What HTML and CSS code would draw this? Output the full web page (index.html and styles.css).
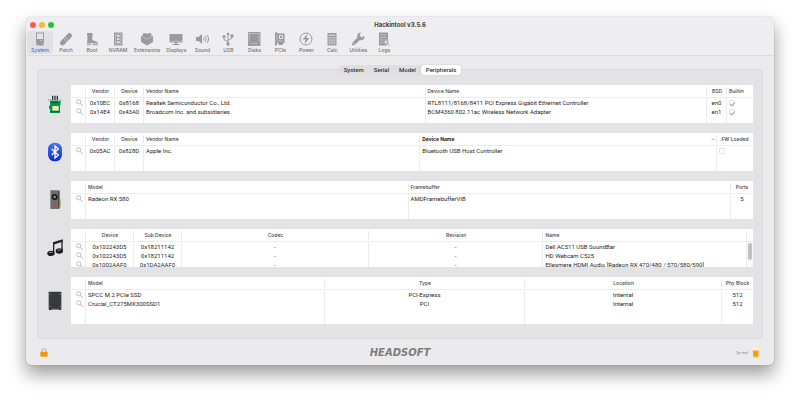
FILE: index.html
```html
<!DOCTYPE html>
<html lang="en">
<head>
    <meta charset="UTF-8">
    <meta name="viewport" content="width=device-width, initial-scale=1.0">
    <title>Hackintool v3.5.6</title>
    <link rel="stylesheet" href="styles.css">
</head>
<body>
    <svg class="defs" width="0" height="0">
        <symbol id="search" viewBox="0 0 14 14">
            <circle cx="5.5" cy="5.5" r="4.3" fill="none" stroke="#a8a8a8" stroke-width="1.4"/>
            <path d="M8.8 8.8L13 13" stroke="#a0a0a0" stroke-width="1.8"/>
        </symbol>
    </svg>

    <div class="window">
        <header class="header">
            <div class="titlebar">
                <div class="lights">
                    <span class="light red"></span>
                    <span class="light yellow"></span>
                    <span class="light green"></span>
                </div>
                <h1>Hackintool v3.5.6</h1>
            </div>
            <nav class="toolbar">
                <button class="tool active">
                    <svg viewBox="0 0 28 28"><path d="M6 1h16v21H6z"/><rect x="8" y="3" width="12" height="11" class="light-fill"/><path class="light-line thin" d="M14 17.500h6"/><path d="M7 22h14v5H7z"/></svg>
                    <span>System</span>
                </button>
                <button class="tool">
                    <svg viewBox="0 0 28 28"><rect x="-1" y="9.500" width="30" height="10" rx="5" transform="rotate(-47 14 14.500)"/><g class="light-fill"><circle cx="14" cy="11.500" r="1"/><circle cx="17" cy="14" r="1"/><circle cx="11" cy="14.500" r="1"/><circle cx="14" cy="17.500" r="1"/></g></svg>
                    <span>Patch</span>
                </button>
                <button class="tool">
                    <svg viewBox="0 0 28 28"><path d="M4 2h11v4l-1 8c1 3 4 4 9 5 2 .5 3 2 3 4H15l-3-2v2H4l1-10z"/><path d="M4 24.500h8v2H4zM15 24.500h11v2H15z"/></svg>
                    <span>Boot</span>
                </button>
                <button class="tool">
                    <svg viewBox="0 0 28 28"><rect x="6" y="1" width="17" height="26"/><path class="light-line thin" d="M9 4v20h11V4z"/><rect x="12" y="6" width="5" height="4" class="light-fill"/><rect x="12" y="12" width="5" height="4" class="light-fill"/><rect x="12" y="18" width="5" height="4" class="light-fill"/></svg>
                    <span>NVRAM</span>
                </button>
                <button class="tool">
                    <svg viewBox="0 0 28 28"><path d="M14 3l12 6v11l-12 7L2 20V9z"/><circle cx="9" cy="6" r="4"/><circle cx="19" cy="6" r="4"/><path class="light-line thin" d="M4 9l10 5 10-5"/></svg>
                    <span>Extensions</span>
                </button>
                <button class="tool">
                    <svg viewBox="0 0 28 28"><path d="M1 4h26v17H1z"/><path class="light-line thin" d="M2 18.500h24"/><path d="M12 20h4v4h5v2H7v-2h5z"/></svg>
                    <span>Displays</span>
                </button>
                <button class="tool">
                    <svg viewBox="0 0 28 28"><path d="M2 10h5l7-6v20l-7-6H2z"/><path class="line" d="M17 11c1 2 1 4 0 6M20 8c3 4 3 8 0 12M24 6c4 5 4 11 0 16"/></svg>
                    <span>Sound</span>
                </button>
                <button class="tool">
                    <svg viewBox="0 0 28 28"><path class="line" d="M14 3v20M14 20l-8-5v-5M14 17l8-5V8"/><path d="M14 0l3.500 6h-7z"/><circle cx="14" cy="24" r="3.500"/><circle cx="6" cy="9" r="3"/><rect x="19" y="5" width="6" height="6"/></svg>
                    <span>USB</span>
                </button>
                <button class="tool">
                    <svg viewBox="0 0 28 28"><rect x="2" y="0" width="25" height="28" rx="2"/><path class="light-line thin" d="M4.500 20V3h20v17M8 25v-4M12 25v-4M16 25v-4M20 25v-4"/></svg>
                    <span>Disks</span>
                </button>
                <button class="tool">
                    <svg viewBox="0 0 28 28"><path d="M4 1h5v2h14v19h-3v4h-9v-4H8v5H4z"/><rect x="12" y="6" width="8" height="8" class="light-fill"/><rect x="14" y="8" width="4" height="4"/><path class="light-line thin" d="M11 18h9M8 5v15"/></svg>
                    <span>PCIe</span>
                </button>
                <button class="tool">
                    <svg viewBox="0 0 28 28"><circle cx="14" cy="14" r="12" class="line"/><path d="M17 4L7 15h6l-2 9 10-12h-6z"/></svg>
                    <span>Power</span>
                </button>
                <button class="tool">
                    <svg viewBox="0 0 28 28"><path d="M5 2h18v25H5z"/><path class="light-line" d="M7 6.500h14"/><path class="light-line thin" d="M5 11.500h18M5 16.500h18M5 21.500h18M9.500 11v15M14 11v15M18.500 11v15"/></svg>
                    <span>Calc</span>
                </button>
                <button class="tool">
                    <svg viewBox="0 0 28 28"><path d="M20 1l-3 6 4 4 6-3c1 6-4 10-9 8L7 26c-3 3-7-1-5-4l11-11c-2-6 2-10 7-10z"/><circle cx="5" cy="23" r="1.300" class="light-fill"/></svg>
                    <span>Utilities</span>
                </button>
                <button class="tool">
                    <svg viewBox="0 0 28 28"><path d="M4 1h18v15h-2v11H4z"/><path class="light-line thin" d="M6 6h13M6 11h13M6 16h7M6 21h5"/><circle cx="18" cy="20" r="5" class="light-fill"/><circle cx="18" cy="20" r="4" class="line"/><path class="line" d="M21 23l4 4"/></svg>
                    <span>Logs</span>
                </button>
            </nav>
        </header>

        <main class="content">
            <div class="tabs">
                <button class="tab">System</button>
                <button class="tab">Serial</button>
                <button class="tab">Model</button>
                <button class="tab selected">Peripherals</button>
            </div>

            <div class="panel">
                <section class="device">
                    <svg class="device-icon" viewBox="0 0 48 60">
                        <path d="M2 17h10v5h24l8-6M8 22l-5-3" fill="none" stroke="#999" stroke-width="2"/>
                        <path d="M15 5h4v14h-4zM22 5h4v14h-4zM29 5h4v14h-4z" fill="#333"/>
                        <path d="M9 20h32v14h-2v23H9V44H6v-9h3z" fill="#079554"/>
                        <rect x="13" y="22" width="20" height="6" fill="#066b3d"/>
                        <rect x="16" y="36" width="19" height="14" fill="#e9f3ae"/>
                        <path d="M10 53h28" stroke="#05653a" stroke-width="3"/>
                    </svg>
                    <div class="table-box">
                        <table>
                            <colgroup><col class="col-search"><col class="col-id"><col class="col-id"><col><col><col class="col-bsd"><col class="col-builtin"></colgroup>
                            <thead>
                                <tr><th></th><th class="center">Vendor</th><th class="center">Device</th><th>Vendor Name</th><th>Device Name</th><th class="center">BSD</th><th>Builtin</th></tr>
                            </thead>
                            <tbody>
                                <tr><td class="find"><svg><use href="#search"/></svg></td><td class="center">0x10EC</td><td class="center">0x8168</td><td>Realtek Semiconductor Co., Ltd.</td><td>RTL8111/8168/8411 PCI Express Gigabit Ethernet Controller</td><td class="center">en0</td><td><input type="checkbox" aria-label="Builtin en0" checked disabled></td></tr>
                                <tr><td class="find"><svg><use href="#search"/></svg></td><td class="center">0x14E4</td><td class="center">0x43A0</td><td>Broadcom Inc. and subsidiaries</td><td>BCM4360 802.11ac Wireless Network Adapter</td><td class="center">en1</td><td><input type="checkbox" aria-label="Builtin en1" checked disabled></td></tr>
                                <tr class="filler"><td></td><td></td><td></td><td></td><td></td><td></td><td></td></tr>
                            </tbody>
                        </table>
                    </div>
                </section>

                <section class="device">
                    <svg class="device-icon" viewBox="0 0 48 60">
                        <defs><linearGradient id="bt" x1="0" y1="0" x2="0" y2="1"><stop offset="0" stop-color="#4b74ee"/><stop offset="1" stop-color="#0b2ccc"/></linearGradient></defs>
                        <rect x="3" y="2" width="42" height="56" rx="20" fill="url(#bt)"/>
                        <path d="M14 21l20 18-10 9V12l10 9-20 18" fill="none" stroke="#fff" stroke-width="4"/>
                    </svg>
                    <div class="table-box">
                        <table>
                            <colgroup><col class="col-search"><col class="col-id"><col class="col-id"><col class="col-bt-vendor"><col><col class="col-fw"></colgroup>
                            <thead>
                                <tr><th></th><th class="center">Vendor</th><th class="center">Device</th><th>Vendor Name</th><th class="sorted"><div>Device Name<svg viewBox="0 0 8 5"><path d="M1 4l3-3 3 3"/></svg></div></th><th class="center">FW Loaded</th></tr>
                            </thead>
                            <tbody>
                                <tr><td class="find"><svg><use href="#search"/></svg></td><td class="center">0x05AC</td><td class="center">0x828D</td><td>Apple Inc.</td><td>Bluetooth USB Host Controller</td><td><input type="checkbox" aria-label="FW Loaded" disabled></td></tr>
                                <tr class="filler"><td></td><td></td><td></td><td></td><td></td><td></td></tr>
                            </tbody>
                        </table>
                    </div>
                </section>

                <section class="device">
                    <svg class="device-icon" viewBox="0 0 48 60">
                        <rect x="10" y="1" width="28" height="56" rx="2" fill="#6f6f70"/>
                        <path d="M37 28h4v22h-4z" fill="#b19a55"/>
                        <path d="M35 4v50" stroke="#4c4c4d" stroke-width="4"/>
                        <circle cx="23" cy="21" r="9" fill="#1c1c1c"/>
                        <circle cx="23" cy="21" r="4" fill="#888"/>
                        <path d="M23 41v10" stroke="#bc3842" stroke-width="3"/>
                    </svg>
                    <div class="table-box">
                        <table>
                            <colgroup><col class="col-search"><col><col><col class="col-ports"></colgroup>
                            <thead>
                                <tr><th></th><th>Model</th><th>Framebuffer</th><th class="center">Ports</th></tr>
                            </thead>
                            <tbody>
                                <tr><td class="find"><svg><use href="#search"/></svg></td><td>Radeon RX 580</td><td>AMDFramebufferVIB</td><td class="center">5</td></tr>
                                <tr class="filler"><td></td><td></td><td></td><td></td></tr>
                            </tbody>
                        </table>
                    </div>
                </section>

                <section class="device">
                    <svg class="device-icon" viewBox="0 0 48 60">
                        <path d="M18 13L47 4v7L18 20z" fill="#222"/>
                        <path d="M20 14v31M45 7v32" stroke="#222" stroke-width="4"/>
                        <ellipse cx="12" cy="46" rx="11" ry="8" fill="#1b1b1b"/>
                        <ellipse cx="37" cy="39" rx="11" ry="8" fill="#1b1b1b"/>
                        <ellipse cx="11" cy="43" rx="6" ry="2" fill="#888"/>
                        <ellipse cx="36" cy="36" rx="6" ry="2" fill="#777"/>
                    </svg>
                    <div class="table-box">
                        <table>
                            <colgroup><col class="col-search"><col class="col-audio"><col class="col-audio"><col class="col-codec"><col class="col-revision"><col><col class="col-scroll"></colgroup>
                            <thead>
                                <tr><th></th><th class="center">Device</th><th class="center">Sub Device</th><th class="center">Codec</th><th class="center">Revision</th><th>Name</th><th></th></tr>
                            </thead>
                            <tbody>
                                <tr><td class="find"><svg><use href="#search"/></svg></td><td class="center">0x102243D5</td><td class="center">0x18211142</td><td class="center">-</td><td class="center">-</td><td>Dell AC511 USB SoundBar</td><td class="track"></td></tr>
                                <tr><td class="find"><svg><use href="#search"/></svg></td><td class="center">0x102243D5</td><td class="center">0x18211142</td><td class="center">-</td><td class="center">-</td><td>HD Webcam C525</td><td class="track"></td></tr>
                                <tr><td class="find"><svg><use href="#search"/></svg></td><td class="center">0x1002AAF0</td><td class="center">0x1DA2AAF0</td><td class="center">-</td><td class="center">-</td><td>Ellesmere HDMI Audio [Radeon RX 470/480 / 570/580/590]</td><td class="track"></td></tr>
                            </tbody>
                        </table>
                        <span class="thumb"></span>
                    </div>
                </section>

                <section class="device storage">
                    <svg class="device-icon" viewBox="0 0 48 60">
                        <rect x="5" y="2" width="38" height="55" rx="2" fill="#38393b"/>
                        <path d="M14 55h22" stroke="#b59d60" stroke-width="3"/>
                        <g fill="#aaa"><circle cx="9" cy="9" r="1.500"/><circle cx="39" cy="9" r="1.500"/><circle cx="9" cy="46" r="1.500"/><circle cx="39" cy="46" r="1.500"/></g>
                    </svg>
                    <div class="table-box">
                        <table>
                            <colgroup><col class="col-search"><col class="col-disk"><col class="col-type"><col><col class="col-block"></colgroup>
                            <thead>
                                <tr><th></th><th>Model</th><th class="center">Type</th><th class="center">Location</th><th class="center">Phy Block</th></tr>
                            </thead>
                            <tbody>
                                <tr><td class="find"><svg><use href="#search"/></svg></td><td>SPCC M.2 PCIe SSD</td><td class="center">PCI-Express</td><td class="center">Internal</td><td class="center">512</td></tr>
                                <tr><td class="find"><svg><use href="#search"/></svg></td><td>Crucial_CT275MX300SSD1</td><td class="center">PCI</td><td class="center">Internal</td><td class="center">512</td></tr>
                                <tr class="filler"><td></td><td></td><td></td><td></td><td></td></tr>
                            </tbody>
                        </table>
                    </div>
                </section>
            </div>
        </main>

        <footer class="footer">
            <button class="lock" aria-label="Lock">
                <svg viewBox="0 0 24 27">
                    <path d="M6 13V7c0-7 12-7 12 0v6" fill="none" stroke="#aaa" stroke-width="3"/>
                    <rect x="1" y="11" width="22" height="15" rx="2" fill="#f79b17"/>
                    <path d="M2 16h20M2 21h20" stroke="#d87c0c" stroke-width="1"/>
                </svg>
            </button>
            <span class="brand">HEADSOFT</span>
            <a class="tip" href="#">
                <span>Tip me!</span>
                <svg viewBox="0 0 24 33">
                    <path d="M2 10h18l-1 20H4z" fill="#f7ab0b"/>
                    <path d="M8 13v14M14 13v14" stroke="#dd8800" stroke-width="2"/>
                    <path d="M20 13h3v12h-4" fill="none" stroke="#e5c98d" stroke-width="2"/>
                    <path d="M1 10c-1-6 4-8 8-8 6-1 13 0 13 8z" fill="#fbf3df"/>
                    <path d="M3 31h17" stroke="#d5d0c4" stroke-width="2"/>
                </svg>
            </a>
        </footer>
    </div>
</body>
</html>
```
FILE: styles.css
```css
* {
    margin: 0;
    padding: 0;
    box-sizing: border-box;
}

body {
    background: #fff;
    color: #262626;
    font-family: Roboto, "Liberation Sans", sans-serif;
    font-size: 6px;
    line-height: 9px;
    padding: 17px 26px 35px;
    overflow: hidden;
}

button {
    border: 0;
    background: none;
    font: inherit;
    color: inherit;
}

.defs {
    position: absolute;
}

.window {
    background: #ebebed;
    border-radius: 5px;
    box-shadow: 0 0 1px rgba(0, 0, 0, 0.4), 0 9px 18px rgba(0, 0, 0, 0.4);
}

/* Title bar and toolbar */
.header {
    background: #eeeef0;
    border-bottom: 1px solid #dcdcde;
    border-radius: 5px 5px 0 0;
    padding: 2px 1px 1px;
    font-family: Inter, "Liberation Sans", sans-serif;
}

.titlebar {
    display: grid;
    grid-template-columns: 1fr auto 1fr;
    align-items: center;
    height: 11px;
}

.lights {
    display: flex;
    gap: 3px;
    padding-left: 3px;
}

.light {
    width: 6px;
    height: 6px;
    border-radius: 50%;
}

.red {
    background: #ff5a52;
}

.yellow {
    background: #fdb827;
}

.green {
    background: #27c23c;
}

h1 {
    font-size: 6px;
    font-weight: 700;
    color: #404040;
}

.toolbar {
    display: flex;
    margin-top: 1px;
}

.tool {
    display: flex;
    flex-direction: column;
    align-items: center;
    min-width: 26px;
    padding: 1px 3px 0;
    border-radius: 3px;
    font-size: 5px;
    font-weight: 500;
    line-height: 8px;
    color: #737375;
}

.tool svg {
    width: 14px;
    height: 14px;
    fill: #9a9a9c;
}

.tool .line {
    fill: none;
    stroke: #9a9a9c;
    stroke-width: 2;
}

.tool .light-fill {
    fill: #e4e4e6;
}

.tool .light-line {
    fill: none;
    stroke: #e4e4e6;
    stroke-width: 2;
}

.tool .thin {
    stroke-width: 1;
}

.tool.active {
    background: #e1e1e3;
    color: #1a80f5;
}

/* Tabs sit across the top edge of the panel */
.content {
    padding: 9px 11px 0;
}

.tabs {
    position: relative;
    display: flex;
    width: max-content;
    margin: 0 auto -6px;
    background: #dfdfe1;
    border-radius: 3px;
}

.tab {
    padding: 0 5px;
    border-radius: 2px;
    font-weight: 500;
    line-height: 10px;
    color: #333;
}

.tab.selected {
    background: #fff;
    box-shadow: 0 0 1px rgba(0, 0, 0, 0.4);
}

.panel {
    display: flex;
    flex-direction: column;
    gap: 10px;
    padding: 15px 9px 14px 0;
    background: #e3e3e5;
    border: 1px solid #dcdcde;
    border-radius: 3px;
}

.device {
    display: grid;
    grid-template-columns: 33px 1fr;
    align-items: center;
}

.device-icon {
    width: 16px;
    height: 20px;
    justify-self: center;
}

.table-box {
    position: relative;
    height: 38px;
    background: #fff;
    overflow: hidden;
}

.storage .table-box {
    height: 47px;
}

table {
    width: 100%;
    height: 100%;
    table-layout: fixed;
    border-collapse: separate;
    border-spacing: 0;
}

th,
td {
    height: 9px;
    padding: 0 2px;
    text-align: left;
    white-space: nowrap;
}

th {
    height: 13px;
    font-family: Inter, "Liberation Sans", sans-serif;
    font-size: 5px;
    font-weight: 500;
    color: #444;
    border-bottom: 1px solid #ececec;
    background: linear-gradient(#e6e6e6, #e6e6e6) no-repeat right center / 1px 8px;
}

td {
    border-right: 1px solid #ececec;
}

th:last-child {
    background: none;
}

td:last-child {
    border-right: 0;
}

.filler td {
    height: auto;
}

th.center,
td.center {
    padding: 0;
    text-align: center;
}

.find {
    padding-left: 5px;
}

.find svg {
    display: block;
    width: 7px;
    height: 7px;
}

.sorted {
    font-weight: 700;
    color: #222;
}

.sorted div {
    display: flex;
    justify-content: space-between;
    align-items: center;
}

.sorted svg {
    width: 4px;
    height: 3px;
    fill: none;
    stroke: #666;
}

input[type="checkbox"] {
    appearance: none;
    display: block;
    width: 6px;
    height: 6px;
    background: #fdfdfd;
    border: 1px solid #e3e3e3;
    border-radius: 1px;
}

input[type="checkbox"]:checked::after {
    content: "";
    display: block;
    width: 2px;
    height: 4px;
    margin-left: 1px;
    border: solid #aaa;
    border-width: 0 1px 1px 0;
    transform: rotate(40deg);
}

.col-search {
    width: 15px;
}

.col-id {
    width: 29px;
}

.col-bsd {
    width: 20px;
}

.col-builtin {
    width: 26px;
}

.col-bt-vendor {
    width: 40.5%;
}

.col-fw {
    width: 36px;
}

.col-ports {
    width: 22px;
}

.col-audio {
    width: 48px;
}

.col-codec {
    width: 27.4%;
}

.col-revision {
    width: 25.6%;
}

.col-scroll {
    width: 6px;
}

.col-disk {
    width: 35%;
}

.col-type {
    width: 29.4%;
}

.col-block {
    width: 31px;
}

.track {
    background: #fafafa;
}

.thumb {
    position: absolute;
    top: 14px;
    right: 1px;
    width: 4px;
    height: 17px;
    border-radius: 2px;
    background: #c1c1c1;
}

/* Footer */
.footer {
    display: grid;
    grid-template-columns: 1fr auto 1fr;
    align-items: center;
    height: 26px;
    padding: 0 14px;
}

.lock {
    justify-self: start;
}

.lock svg {
    display: block;
    width: 8px;
    height: 9px;
}

.brand {
    font-family: "DejaVu Sans", sans-serif;
    font-size: 10px;
    font-weight: 700;
    font-style: italic;
    color: #7d7d7f;
}

.tip {
    display: flex;
    align-items: center;
    justify-self: end;
    gap: 4px;
    font-size: 4px;
    font-style: italic;
    color: #858587;
    text-decoration: none;
}

.tip svg {
    width: 8px;
    height: 11px;
}
```
